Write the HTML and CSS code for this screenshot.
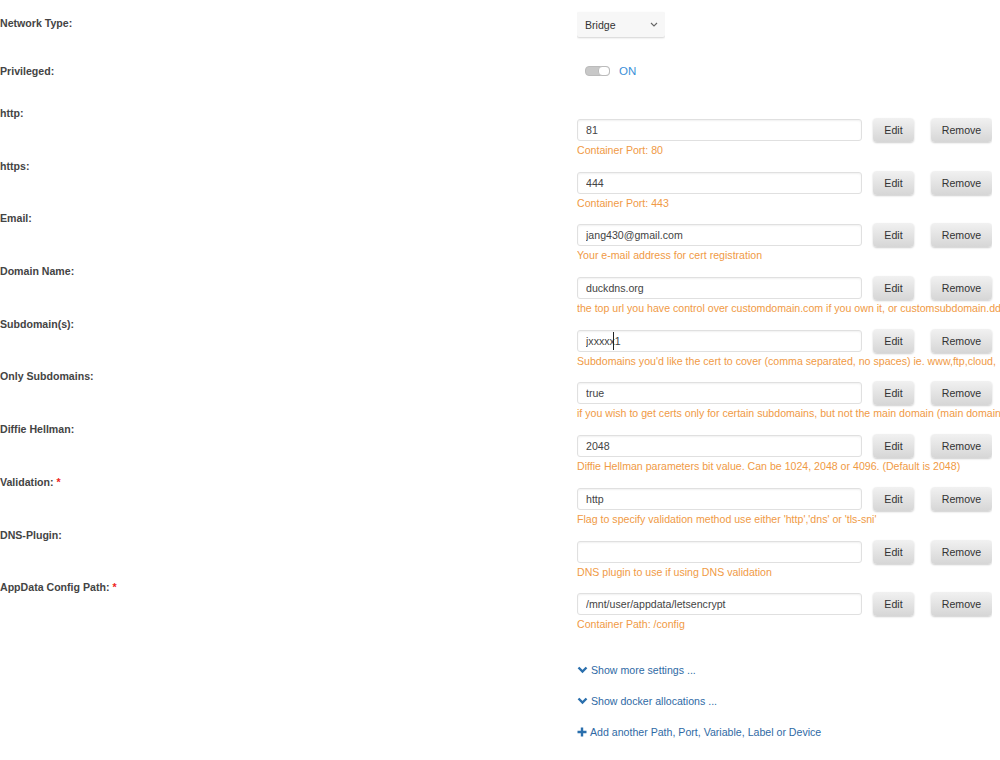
FILE: index.html
```html
<!DOCTYPE html>
<html lang="en">
<head>
    <meta charset="UTF-8">
    <title>Add Container</title>
    <link rel="stylesheet" href="styles.css">
</head>
<body>

    <div class="form">
        <div class="row row-network">
            <div class="label">Network Type:</div>
            <div class="field">
                <div class="select">
                    <span>Bridge</span>
                    <svg width="8" height="5" viewBox="0 0 8 5"><path d="M1 1l3 3 3-3" fill="none" stroke="#666" stroke-width="1.1"/></svg>
                </div>
            </div>
        </div>

        <div class="row row-privileged">
            <div class="label">Privileged:</div>
            <div class="field switch">
                <span class="toggle"><span class="knob"></span></span>
                <span class="switch-text">ON</span>
            </div>
        </div>

        <div class="row">
            <div class="label">http:</div>
            <div class="field">
                <div class="line"><input class="text" value="81"><button>Edit</button><button class="remove">Remove</button></div>
                <div class="hint">Container Port: 80</div>
            </div>
        </div>

        <div class="row">
            <div class="label">https:</div>
            <div class="field">
                <div class="line"><input class="text" value="444"><button>Edit</button><button class="remove">Remove</button></div>
                <div class="hint">Container Port: 443</div>
            </div>
        </div>

        <div class="row">
            <div class="label">Email:</div>
            <div class="field">
                <div class="line"><input class="text" value="jang430@gmail.com"><button>Edit</button><button class="remove">Remove</button></div>
                <div class="hint">Your e-mail address for cert registration</div>
            </div>
        </div>

        <div class="row">
            <div class="label">Domain Name:</div>
            <div class="field">
                <div class="line"><input class="text" value="duckdns.org"><button>Edit</button><button class="remove">Remove</button></div>
                <div class="hint">the top url you have control over customdomain.com if you own it, or customsubdomain.dd</div>
            </div>
        </div>

        <div class="row">
            <div class="label">Subdomain(s):</div>
            <div class="field">
                <div class="line">
                    <div class="input-wrap"><input class="text" value="jxxxxx1"><span class="ibeam"></span></div>
                    <button>Edit</button><button class="remove">Remove</button>
                </div>
                <div class="hint">Subdomains you'd like the cert to cover (comma separated, no spaces) ie. www,ftp,cloud,</div>
            </div>
        </div>

        <div class="row">
            <div class="label">Only Subdomains:</div>
            <div class="field">
                <div class="line"><input class="text" value="true"><button>Edit</button><button class="remove">Remove</button></div>
                <div class="hint">if you wish to get certs only for certain subdomains, but not the main domain (main domain</div>
            </div>
        </div>

        <div class="row">
            <div class="label">Diffie Hellman:</div>
            <div class="field">
                <div class="line"><input class="text" value="2048"><button>Edit</button><button class="remove">Remove</button></div>
                <div class="hint">Diffie Hellman parameters bit value. Can be 1024, 2048 or 4096. (Default is 2048)</div>
            </div>
        </div>

        <div class="row">
            <div class="label">Validation: <span class="req">*</span></div>
            <div class="field">
                <div class="line"><input class="text" value="http"><button>Edit</button><button class="remove">Remove</button></div>
                <div class="hint">Flag to specify validation method use either 'http','dns' or 'tls-sni'</div>
            </div>
        </div>

        <div class="row">
            <div class="label">DNS-Plugin:</div>
            <div class="field">
                <div class="line"><input class="text" value=""><button>Edit</button><button class="remove">Remove</button></div>
                <div class="hint">DNS plugin to use if using DNS validation</div>
            </div>
        </div>

        <div class="row">
            <div class="label">AppData Config Path: <span class="req">*</span></div>
            <div class="field">
                <div class="line"><input class="text" value="/mnt/user/appdata/letsencrypt"><button>Edit</button><button class="remove">Remove</button></div>
                <div class="hint">Container Path: /config</div>
            </div>
        </div>

        <!-- toggles under the template fields -->
        <div class="links">
            <a href="#" class="link">
                <svg width="11" height="8" viewBox="0 0 11 8"><path d="M1.5 1.5l4 4 4-4" fill="none" stroke="#2a6fad" stroke-width="2.4"/></svg>
                Show more settings ...
            </a>
            <a href="#" class="link">
                <svg width="11" height="8" viewBox="0 0 11 8"><path d="M1.5 1.5l4 4 4-4" fill="none" stroke="#2a6fad" stroke-width="2.4"/></svg>
                Show docker allocations ...
            </a>
            <a href="#" class="link">
                <svg width="10" height="10" viewBox="0 0 10 10"><path d="M5 0.5v9M0.5 5h9" fill="none" stroke="#2a6fad" stroke-width="2.4"/></svg>
                Add another Path, Port, Variable, Label or Device
            </a>
        </div>
    </div>

</body>
</html>
```

FILE: styles.css
```css
/* Base styling */
html,
body {
    overflow: hidden;
}

body {
    margin: 0;
    background: #fff;
    font-family: 'Liberation Sans', Arial, sans-serif;
    font-size: 10.6px;
    color: #333;
}

/* Rows: label column + field column */
.row {
    display: flex;
    height: 52.7px;
}

.label {
    width: 577px;
    flex: none;
    line-height: 14px;
    font-weight: bold;
    color: #444;
}

.req {
    color: #e22;
}

.field {
    padding-top: 12px;
    white-space: nowrap;
    overflow: hidden;
}

.row-network {
    height: 64px;
}

.row-network .label {
    padding-top: 16px;
}

.row-network .field {
    padding-top: 12px;
}

.row-privileged {
    height: 42px;
}

.row-privileged .field {
    padding-top: 0;
}

/* Select box */
.select {
    width: 88px;
    height: 25px;
    box-sizing: border-box;
    padding: 0 7px 0 8px;
    display: flex;
    align-items: center;
    justify-content: space-between;
    background: #f7f7f7;
    border-radius: 2px;
    box-shadow: 0 1px 2px rgba(0, 0, 0, 0.18);
    color: #333;
}

/* Privileged switch */
.switch {
    display: flex;
    align-items: center;
    height: 14px;
    padding-top: 1px;
    padding-left: 8px;
}

.toggle {
    position: relative;
    width: 25px;
    height: 10px;
    box-sizing: border-box;
    background: #c8c8c8;
    border: 1px solid #bbb;
    border-radius: 4px;
}

.knob {
    position: absolute;
    right: -1px;
    top: -1px;
    width: 12px;
    height: 10px;
    box-sizing: border-box;
    background: #fff;
    border: 1px solid #bbb;
    border-radius: 4px;
}

.switch-text {
    margin-left: 9px;
    font-size: 11.5px;
    color: #3a8fd8;
}

/* Input + buttons */
.line {
    display: flex;
    align-items: center;
    height: 24px;
}

.input-wrap {
    position: relative;
}

input.text {
    display: block;
    width: 285px;
    height: 22px;
    box-sizing: border-box;
    margin: 0;
    padding: 0 8px;
    border: 1px solid #e0e0e0;
    border-radius: 3px;
    box-shadow: inset 0 1px 2px rgba(0, 0, 0, 0.06);
    font-family: inherit;
    font-size: 10.6px;
    color: #444;
    background: #fff;
}

/* mouse pointer caught in the screenshot */
.ibeam {
    position: absolute;
    left: 36px;
    top: 2px;
    width: 1px;
    height: 18px;
    background: #222;
}

button {
    height: 24px;
    width: 41px;
    margin-left: 11px;
    padding: 0;
    border: none;
    border-radius: 4px;
    background: linear-gradient(to bottom, #f1f1f1, #d6d6d6);
    box-shadow: 0 1px 2px rgba(0, 0, 0, 0.2);
    font-family: inherit;
    font-size: 10.6px;
    color: #333;
}

button.remove {
    width: 61px;
    margin-left: 17px;
}

.hint {
    margin-top: 1px;
    line-height: 14px;
    color: #f09a45;
}

/* Links at the bottom */
.links {
    margin-left: 577px;
    padding-top: 30px;
    display: flex;
    flex-direction: column;
    gap: 17px;
}

.link {
    display: flex;
    align-items: center;
    gap: 3px;
    line-height: 14px;
    color: #2f6aa5;
    text-decoration: none;
}
```
